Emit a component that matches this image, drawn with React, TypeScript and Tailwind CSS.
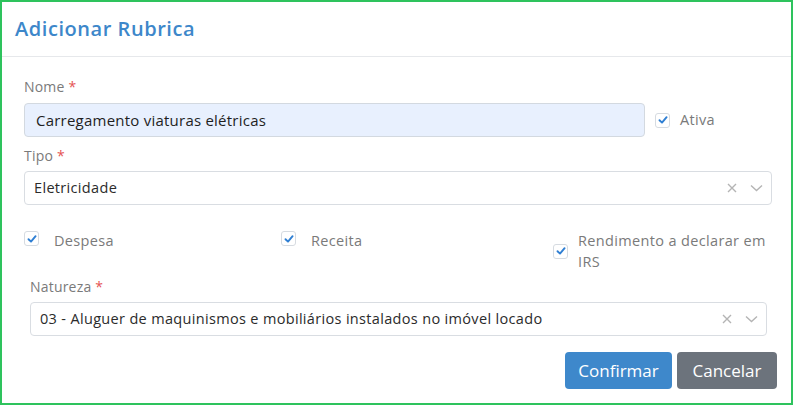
import React from "react";

const font = { fontFamily: '"Open Sans", "Liberation Sans", sans-serif' };

const Check = ({ className = "" }: { className?: string }) => (
  <span
    className={
      "flex h-[15px] w-[15px] shrink-0 items-center justify-center rounded-[3px] border border-[#d6dbe1] bg-white " +
      className
    }
  >
    <svg width="10" height="10" viewBox="0 0 10 10">
      <path d="M1.5 5.2 L4 7.6 L8.6 2.2" fill="none" stroke="#2f7fd3" strokeWidth="1.9" strokeLinecap="round" strokeLinejoin="round" />
    </svg>
  </span>
);

const Label = ({ text, className = "" }: { text: string; className?: string }) => (
  <div className={"text-[14px] leading-[20px] tracking-[0.2px] text-[#7a7a7a] " + className}>
    {text} <span className="text-[#e55353]">*</span>
  </div>
);

const SelectBox = ({ value, className = "" }: { value: string; className?: string }) => (
  <div
    className={
      "flex items-center rounded-[4px] border border-[#d9dde2] bg-white pl-[9px] pr-[8px] " + className
    }
  >
    <span className="flex-1 truncate text-[14.5px] tracking-[0.33px] text-[#2b2b2b]">{value}</span>
    <svg width="10" height="10" viewBox="0 0 10 10" className="mr-[13px]">
      <path d="M1 1 L9 9 M9 1 L1 9" stroke="#b4b4b4" strokeWidth="1.4" />
    </svg>
    <svg width="13" height="8" viewBox="0 0 13 8">
      <path d="M1 1.5 L6.5 6.5 L12 1.5" fill="none" stroke="#b4b4b4" strokeWidth="1.4" />
    </svg>
  </div>
);

export default function App() {
  return (
    <div className="h-[405px] w-[796px] bg-white" style={font}>
      <div className="h-[405px] w-[793px] border-2 border-[#2ec35d]">
        <div className="flex h-[55px] items-center border-b border-[#e6e8eb] px-[13px]">
          <h1 className="text-[20px] font-semibold tracking-[0.55px] text-[#3d87ca]">Adicionar Rubrica</h1>
        </div>

        <div className="pl-[22px] pt-[20px]">
          <Label text="Nome" />
          <div className="mt-[6px] flex items-center">
            <div className="flex h-[34px] w-[621px] items-center rounded-[4px] border border-[#d3d9e0] bg-[#e8f0fe] px-[11px] text-[15px] tracking-[0.23px] text-[#1f1f1f]">
              Carregamento viaturas elétricas
            </div>
            <Check className="ml-[10px]" />
            <span className="ml-[10px] text-[14.5px] tracking-[0.3px] text-[#7a7a7a]">Ativa</span>
          </div>

          <Label text="Tipo" className="mt-[9px]" />
          <SelectBox value="Eletricidade" className="mt-[5px] h-[34px] w-[748px]" />

          <div className="mt-[25px] grid grid-cols-[257px_272px_1fr] text-[14.5px] leading-[21px] tracking-[0.35px] text-[#7a7a7a]">
            <div className="flex items-start">
              <Check className="mt-[1px]" />
              <span className="ml-[15px]">Despesa</span>
            </div>
            <div className="flex items-start">
              <Check className="mt-[1px]" />
              <span className="ml-[15px]">Receita</span>
            </div>
            <div className="flex items-center">
              <Check />
              <span className="ml-[10px] w-[200px]">Rendimento a declarar em IRS</span>
            </div>
          </div>

          <div className="pl-[6px] pr-[14px]">
            <Label text="Natureza" className="mt-[5px]" />
            <SelectBox
              value="03 - Aluguer de maquinismos e mobiliários instalados no imóvel locado"
              className="mt-[5px] h-[34px] w-[737px]"
            />
            <div className="mt-[16px] flex justify-end gap-[5px]">
              <button className="h-[37px] w-[107px] rounded-[4px] bg-[#3e88cb] text-[17px] text-white">Confirmar</button>
              <button className="h-[37px] w-[100px] rounded-[4px] bg-[#6c737c] text-[17px] text-white">Cancelar</button>
            </div>
          </div>
        </div>
      </div>
    </div>
  );
}
